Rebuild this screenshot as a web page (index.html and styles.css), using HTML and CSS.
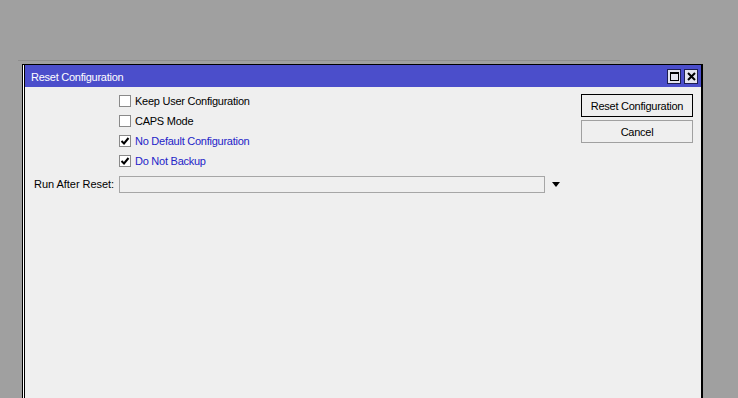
FILE: index.html
```html
<!DOCTYPE html>
<html lang="en">
<head>
<meta charset="UTF-8">
<meta name="viewport" content="width=device-width, initial-scale=1.0">
<title>Reset Configuration</title>
<link rel="stylesheet" href="styles.css">
</head>
<body>

<div class="back-edge"></div>

<div class="window">
  <div class="window-frame">
    <div class="titlebar">
      <span class="title">Reset Configuration</span>
      <div class="title-buttons">
        <span class="tb-btn"><span class="tb-max"></span></span>
        <span class="tb-btn">
          <svg width="9" height="9" viewBox="0 0 9 9"><path d="M1 1 L8 8 M8 1 L1 8" stroke="#000" stroke-width="2" fill="none"/></svg>
        </span>
      </div>
    </div>

    <div class="content">
      <div class="form">
        <div class="label"></div>
        <label class="check-row">
          <span class="check"></span>
          <span>Keep User Configuration</span>
        </label>

        <div class="label"></div>
        <label class="check-row">
          <span class="check"></span>
          <span>CAPS Mode</span>
        </label>

        <div class="label"></div>
        <label class="check-row on">
          <span class="check">
            <svg width="10" height="10" viewBox="0 0 10 10"><path d="M1.5 5 L4 7.5 L8.5 2" stroke="#000" stroke-width="2" fill="none"/></svg>
          </span>
          <span>No Default Configuration</span>
        </label>

        <div class="label"></div>
        <label class="check-row on">
          <span class="check">
            <svg width="10" height="10" viewBox="0 0 10 10"><path d="M1.5 5 L4 7.5 L8.5 2" stroke="#000" stroke-width="2" fill="none"/></svg>
          </span>
          <span>Do Not Backup</span>
        </label>

        <div class="label field-label">Run After Reset:</div>
        <div class="field">
          <div class="input"></div>
          <span class="arrow"></span>
        </div>
      </div>

      <div class="buttons">
        <button class="button default">Reset Configuration</button>
        <button class="button">Cancel</button>
      </div>
    </div>
  </div>
</div>

</body>
</html>
```

FILE: styles.css
```css
body {
  margin: 0;
  height: 100vh;
  background-color: #a0a0a0;
  font-family: "Liberation Sans", Arial, sans-serif;
  font-size: 11px;
  letter-spacing: -0.25px;
  color: #000;
  overflow: hidden;
}

/* borde de la ventana de atras */
.back-edge {
  width: 602px;
  height: 1px;
  margin: 60px 0 0 18px;
  background-color: #8e8e8e;
}

.window {
  margin: 3px 0 0 22px;
  width: 678px;
  height: 333px;
  border: 1px solid #000;
  border-bottom: none;
  padding-left: 1px;
  background-color: #fff;
}

.window-frame {
  height: 100%;
  border-left: 1px solid #000;
  border-right: 1px solid #000;
  background-color: #efefef;
}

.titlebar {
  display: flex;
  align-items: center;
  justify-content: space-between;
  height: 22px;
  padding: 0 3px 0 6px;
  background-color: #4b4ecb;
  color: #fff;
}

.title {
  padding-top: 2px;
}

.title-buttons {
  display: flex;
  gap: 3px;
}

.tb-btn {
  display: flex;
  align-items: center;
  justify-content: center;
  width: 12px;
  height: 13px;
  border: 1px solid #1e1e50;
  background-color: #e4e4ee;
}

.tb-max {
  width: 7px;
  height: 6px;
  border: 1px solid #000;
  border-top-width: 2px;
}

.content {
  display: flex;
  padding: 4px 8px 0 0;
}

.form {
  display: grid;
  grid-template-columns: 89px 442px;
  column-gap: 5px;
  align-content: start;
}

.label {
  text-align: right;
}

.check-row {
  display: flex;
  align-items: center;
  gap: 4px;
  height: 20px;
}

.check-row.on {
  color: #2323c8;
}

.check {
  display: flex;
  align-items: center;
  justify-content: center;
  width: 10px;
  height: 10px;
  border: 1px solid #8a8a8a;
  background-color: #fff;
}

.field-label {
  margin-top: 5px;
  line-height: 17px;
  letter-spacing: -0.05px;
}

.field {
  display: flex;
  align-items: center;
  margin-top: 5px;
}

.input {
  width: 424px;
  height: 15px;
  border: 1px solid #a6a6a6;
  background-color: #efefef;
}

.arrow {
  margin-left: 7px;
  width: 0;
  height: 0;
  border-left: 4.5px solid transparent;
  border-right: 4.5px solid transparent;
  border-top: 5px solid #000;
}

.buttons {
  display: flex;
  flex-direction: column;
  gap: 3px;
  margin-left: auto;
  padding-top: 3px;
}

.button {
  width: 112px;
  height: 23px;
  padding: 0;
  font-family: inherit;
  font-size: 11px;
  letter-spacing: -0.25px;
  color: #000;
  background-color: #efefef;
  border: 1px solid #a0a0a0;
  border-radius: 0;
}

.button.default {
  border-color: #000;
}
```
